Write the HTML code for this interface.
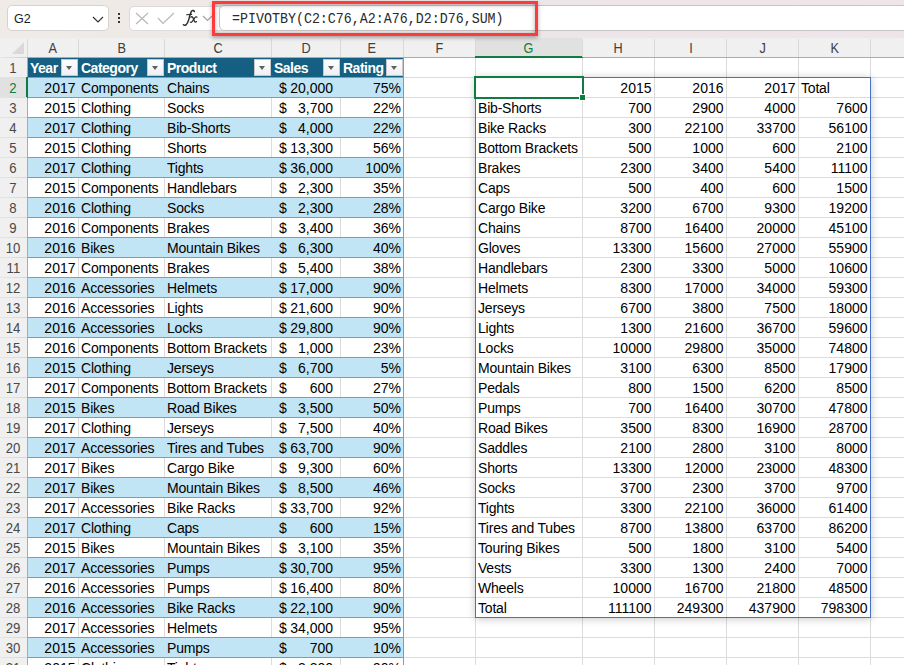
<!DOCTYPE html><html><head><meta charset="utf-8"><style>
*{margin:0;padding:0;box-sizing:border-box}
html,body{width:904px;height:665px;overflow:hidden;background:#fff}
body{position:relative;font-family:"Liberation Sans",sans-serif;font-size:14px;color:#000}
.a{position:absolute}
.t{position:absolute;white-space:nowrap;line-height:20px;height:20px}
.r{text-align:right}
.c{text-align:center}
</style></head><body>

<div class="a" style="left:78px;top:58px;width:1px;height:607px;background:#DCDCDC"></div>
<div class="a" style="left:164px;top:58px;width:1px;height:607px;background:#DCDCDC"></div>
<div class="a" style="left:271px;top:58px;width:1px;height:607px;background:#DCDCDC"></div>
<div class="a" style="left:340px;top:58px;width:1px;height:607px;background:#DCDCDC"></div>
<div class="a" style="left:403px;top:58px;width:1px;height:607px;background:#DCDCDC"></div>
<div class="a" style="left:475px;top:58px;width:1px;height:607px;background:#DCDCDC"></div>
<div class="a" style="left:582px;top:58px;width:1px;height:607px;background:#DCDCDC"></div>
<div class="a" style="left:654px;top:58px;width:1px;height:607px;background:#DCDCDC"></div>
<div class="a" style="left:726px;top:58px;width:1px;height:607px;background:#DCDCDC"></div>
<div class="a" style="left:798px;top:58px;width:1px;height:607px;background:#DCDCDC"></div>
<div class="a" style="left:870px;top:58px;width:1px;height:607px;background:#DCDCDC"></div>
<div class="a" style="left:942px;top:58px;width:1px;height:607px;background:#DCDCDC"></div>
<div class="a" style="left:28px;top:77px;width:876px;height:1px;background:#DCDCDC"></div>
<div class="a" style="left:28px;top:97px;width:876px;height:1px;background:#DCDCDC"></div>
<div class="a" style="left:28px;top:117px;width:876px;height:1px;background:#DCDCDC"></div>
<div class="a" style="left:28px;top:137px;width:876px;height:1px;background:#DCDCDC"></div>
<div class="a" style="left:28px;top:157px;width:876px;height:1px;background:#DCDCDC"></div>
<div class="a" style="left:28px;top:177px;width:876px;height:1px;background:#DCDCDC"></div>
<div class="a" style="left:28px;top:197px;width:876px;height:1px;background:#DCDCDC"></div>
<div class="a" style="left:28px;top:217px;width:876px;height:1px;background:#DCDCDC"></div>
<div class="a" style="left:28px;top:237px;width:876px;height:1px;background:#DCDCDC"></div>
<div class="a" style="left:28px;top:257px;width:876px;height:1px;background:#DCDCDC"></div>
<div class="a" style="left:28px;top:277px;width:876px;height:1px;background:#DCDCDC"></div>
<div class="a" style="left:28px;top:297px;width:876px;height:1px;background:#DCDCDC"></div>
<div class="a" style="left:28px;top:317px;width:876px;height:1px;background:#DCDCDC"></div>
<div class="a" style="left:28px;top:337px;width:876px;height:1px;background:#DCDCDC"></div>
<div class="a" style="left:28px;top:357px;width:876px;height:1px;background:#DCDCDC"></div>
<div class="a" style="left:28px;top:377px;width:876px;height:1px;background:#DCDCDC"></div>
<div class="a" style="left:28px;top:397px;width:876px;height:1px;background:#DCDCDC"></div>
<div class="a" style="left:28px;top:417px;width:876px;height:1px;background:#DCDCDC"></div>
<div class="a" style="left:28px;top:437px;width:876px;height:1px;background:#DCDCDC"></div>
<div class="a" style="left:28px;top:457px;width:876px;height:1px;background:#DCDCDC"></div>
<div class="a" style="left:28px;top:477px;width:876px;height:1px;background:#DCDCDC"></div>
<div class="a" style="left:28px;top:497px;width:876px;height:1px;background:#DCDCDC"></div>
<div class="a" style="left:28px;top:517px;width:876px;height:1px;background:#DCDCDC"></div>
<div class="a" style="left:28px;top:537px;width:876px;height:1px;background:#DCDCDC"></div>
<div class="a" style="left:28px;top:557px;width:876px;height:1px;background:#DCDCDC"></div>
<div class="a" style="left:28px;top:577px;width:876px;height:1px;background:#DCDCDC"></div>
<div class="a" style="left:28px;top:597px;width:876px;height:1px;background:#DCDCDC"></div>
<div class="a" style="left:28px;top:617px;width:876px;height:1px;background:#DCDCDC"></div>
<div class="a" style="left:28px;top:637px;width:876px;height:1px;background:#DCDCDC"></div>
<div class="a" style="left:28px;top:657px;width:876px;height:1px;background:#DCDCDC"></div>
<div class="a" style="left:28px;top:677px;width:876px;height:1px;background:#DCDCDC"></div>
<div class="a" style="left:28px;top:58px;width:376px;height:19px;background:#156082"></div>
<div class="a" style="left:28px;top:77px;width:376px;height:1px;background:#46B1E1"></div>
<div class="t" style="left:30px;top:58px;font-weight:bold;color:#fff;letter-spacing:-0.5px">Year</div>
<div class="a" style="left:61px;top:59px;width:17px;height:17px;background:linear-gradient(#fff,#EDEFF2);border:1px solid #CBC5C5"></div>
<div class="a" style="left:66px;top:66px;width:0;height:0;border-left:3.5px solid transparent;border-right:3.5px solid transparent;border-top:4px solid #5F5F5F"></div>
<div class="t" style="left:81px;top:58px;font-weight:bold;color:#fff;letter-spacing:-0.5px">Category</div>
<div class="a" style="left:147px;top:59px;width:17px;height:17px;background:linear-gradient(#fff,#EDEFF2);border:1px solid #CBC5C5"></div>
<div class="a" style="left:152px;top:66px;width:0;height:0;border-left:3.5px solid transparent;border-right:3.5px solid transparent;border-top:4px solid #5F5F5F"></div>
<div class="t" style="left:167px;top:58px;font-weight:bold;color:#fff;letter-spacing:-0.5px">Product</div>
<div class="a" style="left:254px;top:59px;width:17px;height:17px;background:linear-gradient(#fff,#EDEFF2);border:1px solid #CBC5C5"></div>
<div class="a" style="left:259px;top:66px;width:0;height:0;border-left:3.5px solid transparent;border-right:3.5px solid transparent;border-top:4px solid #5F5F5F"></div>
<div class="t" style="left:274px;top:58px;font-weight:bold;color:#fff;letter-spacing:-0.5px">Sales</div>
<div class="a" style="left:323px;top:59px;width:17px;height:17px;background:linear-gradient(#fff,#EDEFF2);border:1px solid #CBC5C5"></div>
<div class="a" style="left:328px;top:66px;width:0;height:0;border-left:3.5px solid transparent;border-right:3.5px solid transparent;border-top:4px solid #5F5F5F"></div>
<div class="t" style="left:343px;top:58px;font-weight:bold;color:#fff;letter-spacing:-0.5px">Rating</div>
<div class="a" style="left:386px;top:59px;width:17px;height:17px;background:linear-gradient(#fff,#EDEFF2);border:1px solid #CBC5C5"></div>
<div class="a" style="left:391px;top:66px;width:0;height:0;border-left:3.5px solid transparent;border-right:3.5px solid transparent;border-top:4px solid #5F5F5F"></div>
<div class="a" style="left:28px;top:78px;width:376px;height:19px;background:#C1E5F5"></div>
<div class="a" style="left:28px;top:97px;width:376px;height:1px;background:#46B1E1"></div>
<div class="t r" style="left:28px;width:47.5px;top:78px">2017</div>
<div class="t" style="left:81px;top:78px;letter-spacing:-0.2px">Components</div>
<div class="t" style="left:167px;top:78px;letter-spacing:-0.2px">Chains</div>
<div class="t" style="left:279px;top:78px">$</div>
<div class="t r" style="left:272px;width:61px;top:78px">20,000</div>
<div class="t r" style="left:341px;width:60px;top:78px">75%</div>
<div class="a" style="left:28px;top:117px;width:376px;height:1px;background:#46B1E1"></div>
<div class="t r" style="left:28px;width:47.5px;top:98px">2015</div>
<div class="t" style="left:81px;top:98px;letter-spacing:-0.2px">Clothing</div>
<div class="t" style="left:167px;top:98px;letter-spacing:-0.2px">Socks</div>
<div class="t" style="left:279px;top:98px">$</div>
<div class="t r" style="left:272px;width:61px;top:98px">3,700</div>
<div class="t r" style="left:341px;width:60px;top:98px">22%</div>
<div class="a" style="left:28px;top:118px;width:376px;height:19px;background:#C1E5F5"></div>
<div class="a" style="left:28px;top:137px;width:376px;height:1px;background:#46B1E1"></div>
<div class="t r" style="left:28px;width:47.5px;top:118px">2017</div>
<div class="t" style="left:81px;top:118px;letter-spacing:-0.2px">Clothing</div>
<div class="t" style="left:167px;top:118px;letter-spacing:-0.2px">Bib-Shorts</div>
<div class="t" style="left:279px;top:118px">$</div>
<div class="t r" style="left:272px;width:61px;top:118px">4,000</div>
<div class="t r" style="left:341px;width:60px;top:118px">22%</div>
<div class="a" style="left:28px;top:157px;width:376px;height:1px;background:#46B1E1"></div>
<div class="t r" style="left:28px;width:47.5px;top:138px">2015</div>
<div class="t" style="left:81px;top:138px;letter-spacing:-0.2px">Clothing</div>
<div class="t" style="left:167px;top:138px;letter-spacing:-0.2px">Shorts</div>
<div class="t" style="left:279px;top:138px">$</div>
<div class="t r" style="left:272px;width:61px;top:138px">13,300</div>
<div class="t r" style="left:341px;width:60px;top:138px">56%</div>
<div class="a" style="left:28px;top:158px;width:376px;height:19px;background:#C1E5F5"></div>
<div class="a" style="left:28px;top:177px;width:376px;height:1px;background:#46B1E1"></div>
<div class="t r" style="left:28px;width:47.5px;top:158px">2017</div>
<div class="t" style="left:81px;top:158px;letter-spacing:-0.2px">Clothing</div>
<div class="t" style="left:167px;top:158px;letter-spacing:-0.2px">Tights</div>
<div class="t" style="left:279px;top:158px">$</div>
<div class="t r" style="left:272px;width:61px;top:158px">36,000</div>
<div class="t r" style="left:341px;width:60px;top:158px">100%</div>
<div class="a" style="left:28px;top:197px;width:376px;height:1px;background:#46B1E1"></div>
<div class="t r" style="left:28px;width:47.5px;top:178px">2015</div>
<div class="t" style="left:81px;top:178px;letter-spacing:-0.2px">Components</div>
<div class="t" style="left:167px;top:178px;letter-spacing:-0.2px">Handlebars</div>
<div class="t" style="left:279px;top:178px">$</div>
<div class="t r" style="left:272px;width:61px;top:178px">2,300</div>
<div class="t r" style="left:341px;width:60px;top:178px">35%</div>
<div class="a" style="left:28px;top:198px;width:376px;height:19px;background:#C1E5F5"></div>
<div class="a" style="left:28px;top:217px;width:376px;height:1px;background:#46B1E1"></div>
<div class="t r" style="left:28px;width:47.5px;top:198px">2016</div>
<div class="t" style="left:81px;top:198px;letter-spacing:-0.2px">Clothing</div>
<div class="t" style="left:167px;top:198px;letter-spacing:-0.2px">Socks</div>
<div class="t" style="left:279px;top:198px">$</div>
<div class="t r" style="left:272px;width:61px;top:198px">2,300</div>
<div class="t r" style="left:341px;width:60px;top:198px">28%</div>
<div class="a" style="left:28px;top:237px;width:376px;height:1px;background:#46B1E1"></div>
<div class="t r" style="left:28px;width:47.5px;top:218px">2016</div>
<div class="t" style="left:81px;top:218px;letter-spacing:-0.2px">Components</div>
<div class="t" style="left:167px;top:218px;letter-spacing:-0.2px">Brakes</div>
<div class="t" style="left:279px;top:218px">$</div>
<div class="t r" style="left:272px;width:61px;top:218px">3,400</div>
<div class="t r" style="left:341px;width:60px;top:218px">36%</div>
<div class="a" style="left:28px;top:238px;width:376px;height:19px;background:#C1E5F5"></div>
<div class="a" style="left:28px;top:257px;width:376px;height:1px;background:#46B1E1"></div>
<div class="t r" style="left:28px;width:47.5px;top:238px">2016</div>
<div class="t" style="left:81px;top:238px;letter-spacing:-0.2px">Bikes</div>
<div class="t" style="left:167px;top:238px;letter-spacing:-0.2px">Mountain Bikes</div>
<div class="t" style="left:279px;top:238px">$</div>
<div class="t r" style="left:272px;width:61px;top:238px">6,300</div>
<div class="t r" style="left:341px;width:60px;top:238px">40%</div>
<div class="a" style="left:28px;top:277px;width:376px;height:1px;background:#46B1E1"></div>
<div class="t r" style="left:28px;width:47.5px;top:258px">2017</div>
<div class="t" style="left:81px;top:258px;letter-spacing:-0.2px">Components</div>
<div class="t" style="left:167px;top:258px;letter-spacing:-0.2px">Brakes</div>
<div class="t" style="left:279px;top:258px">$</div>
<div class="t r" style="left:272px;width:61px;top:258px">5,400</div>
<div class="t r" style="left:341px;width:60px;top:258px">38%</div>
<div class="a" style="left:28px;top:278px;width:376px;height:19px;background:#C1E5F5"></div>
<div class="a" style="left:28px;top:297px;width:376px;height:1px;background:#46B1E1"></div>
<div class="t r" style="left:28px;width:47.5px;top:278px">2016</div>
<div class="t" style="left:81px;top:278px;letter-spacing:-0.2px">Accessories</div>
<div class="t" style="left:167px;top:278px;letter-spacing:-0.2px">Helmets</div>
<div class="t" style="left:279px;top:278px">$</div>
<div class="t r" style="left:272px;width:61px;top:278px">17,000</div>
<div class="t r" style="left:341px;width:60px;top:278px">90%</div>
<div class="a" style="left:28px;top:317px;width:376px;height:1px;background:#46B1E1"></div>
<div class="t r" style="left:28px;width:47.5px;top:298px">2016</div>
<div class="t" style="left:81px;top:298px;letter-spacing:-0.2px">Accessories</div>
<div class="t" style="left:167px;top:298px;letter-spacing:-0.2px">Lights</div>
<div class="t" style="left:279px;top:298px">$</div>
<div class="t r" style="left:272px;width:61px;top:298px">21,600</div>
<div class="t r" style="left:341px;width:60px;top:298px">90%</div>
<div class="a" style="left:28px;top:318px;width:376px;height:19px;background:#C1E5F5"></div>
<div class="a" style="left:28px;top:337px;width:376px;height:1px;background:#46B1E1"></div>
<div class="t r" style="left:28px;width:47.5px;top:318px">2016</div>
<div class="t" style="left:81px;top:318px;letter-spacing:-0.2px">Accessories</div>
<div class="t" style="left:167px;top:318px;letter-spacing:-0.2px">Locks</div>
<div class="t" style="left:279px;top:318px">$</div>
<div class="t r" style="left:272px;width:61px;top:318px">29,800</div>
<div class="t r" style="left:341px;width:60px;top:318px">90%</div>
<div class="a" style="left:28px;top:357px;width:376px;height:1px;background:#46B1E1"></div>
<div class="t r" style="left:28px;width:47.5px;top:338px">2016</div>
<div class="t" style="left:81px;top:338px;letter-spacing:-0.2px">Components</div>
<div class="t" style="left:167px;top:338px;letter-spacing:-0.2px">Bottom Brackets</div>
<div class="t" style="left:279px;top:338px">$</div>
<div class="t r" style="left:272px;width:61px;top:338px">1,000</div>
<div class="t r" style="left:341px;width:60px;top:338px">23%</div>
<div class="a" style="left:28px;top:358px;width:376px;height:19px;background:#C1E5F5"></div>
<div class="a" style="left:28px;top:377px;width:376px;height:1px;background:#46B1E1"></div>
<div class="t r" style="left:28px;width:47.5px;top:358px">2015</div>
<div class="t" style="left:81px;top:358px;letter-spacing:-0.2px">Clothing</div>
<div class="t" style="left:167px;top:358px;letter-spacing:-0.2px">Jerseys</div>
<div class="t" style="left:279px;top:358px">$</div>
<div class="t r" style="left:272px;width:61px;top:358px">6,700</div>
<div class="t r" style="left:341px;width:60px;top:358px">5%</div>
<div class="a" style="left:28px;top:397px;width:376px;height:1px;background:#46B1E1"></div>
<div class="t r" style="left:28px;width:47.5px;top:378px">2017</div>
<div class="t" style="left:81px;top:378px;letter-spacing:-0.2px">Components</div>
<div class="t" style="left:167px;top:378px;letter-spacing:-0.2px">Bottom Brackets</div>
<div class="t" style="left:279px;top:378px">$</div>
<div class="t r" style="left:272px;width:61px;top:378px">600</div>
<div class="t r" style="left:341px;width:60px;top:378px">27%</div>
<div class="a" style="left:28px;top:398px;width:376px;height:19px;background:#C1E5F5"></div>
<div class="a" style="left:28px;top:417px;width:376px;height:1px;background:#46B1E1"></div>
<div class="t r" style="left:28px;width:47.5px;top:398px">2015</div>
<div class="t" style="left:81px;top:398px;letter-spacing:-0.2px">Bikes</div>
<div class="t" style="left:167px;top:398px;letter-spacing:-0.2px">Road Bikes</div>
<div class="t" style="left:279px;top:398px">$</div>
<div class="t r" style="left:272px;width:61px;top:398px">3,500</div>
<div class="t r" style="left:341px;width:60px;top:398px">50%</div>
<div class="a" style="left:28px;top:437px;width:376px;height:1px;background:#46B1E1"></div>
<div class="t r" style="left:28px;width:47.5px;top:418px">2017</div>
<div class="t" style="left:81px;top:418px;letter-spacing:-0.2px">Clothing</div>
<div class="t" style="left:167px;top:418px;letter-spacing:-0.2px">Jerseys</div>
<div class="t" style="left:279px;top:418px">$</div>
<div class="t r" style="left:272px;width:61px;top:418px">7,500</div>
<div class="t r" style="left:341px;width:60px;top:418px">40%</div>
<div class="a" style="left:28px;top:438px;width:376px;height:19px;background:#C1E5F5"></div>
<div class="a" style="left:28px;top:457px;width:376px;height:1px;background:#46B1E1"></div>
<div class="t r" style="left:28px;width:47.5px;top:438px">2017</div>
<div class="t" style="left:81px;top:438px;letter-spacing:-0.2px">Accessories</div>
<div class="t" style="left:167px;top:438px;letter-spacing:-0.2px">Tires and Tubes</div>
<div class="t" style="left:279px;top:438px">$</div>
<div class="t r" style="left:272px;width:61px;top:438px">63,700</div>
<div class="t r" style="left:341px;width:60px;top:438px">90%</div>
<div class="a" style="left:28px;top:477px;width:376px;height:1px;background:#46B1E1"></div>
<div class="t r" style="left:28px;width:47.5px;top:458px">2017</div>
<div class="t" style="left:81px;top:458px;letter-spacing:-0.2px">Bikes</div>
<div class="t" style="left:167px;top:458px;letter-spacing:-0.2px">Cargo Bike</div>
<div class="t" style="left:279px;top:458px">$</div>
<div class="t r" style="left:272px;width:61px;top:458px">9,300</div>
<div class="t r" style="left:341px;width:60px;top:458px">60%</div>
<div class="a" style="left:28px;top:478px;width:376px;height:19px;background:#C1E5F5"></div>
<div class="a" style="left:28px;top:497px;width:376px;height:1px;background:#46B1E1"></div>
<div class="t r" style="left:28px;width:47.5px;top:478px">2017</div>
<div class="t" style="left:81px;top:478px;letter-spacing:-0.2px">Bikes</div>
<div class="t" style="left:167px;top:478px;letter-spacing:-0.2px">Mountain Bikes</div>
<div class="t" style="left:279px;top:478px">$</div>
<div class="t r" style="left:272px;width:61px;top:478px">8,500</div>
<div class="t r" style="left:341px;width:60px;top:478px">46%</div>
<div class="a" style="left:28px;top:517px;width:376px;height:1px;background:#46B1E1"></div>
<div class="t r" style="left:28px;width:47.5px;top:498px">2017</div>
<div class="t" style="left:81px;top:498px;letter-spacing:-0.2px">Accessories</div>
<div class="t" style="left:167px;top:498px;letter-spacing:-0.2px">Bike Racks</div>
<div class="t" style="left:279px;top:498px">$</div>
<div class="t r" style="left:272px;width:61px;top:498px">33,700</div>
<div class="t r" style="left:341px;width:60px;top:498px">92%</div>
<div class="a" style="left:28px;top:518px;width:376px;height:19px;background:#C1E5F5"></div>
<div class="a" style="left:28px;top:537px;width:376px;height:1px;background:#46B1E1"></div>
<div class="t r" style="left:28px;width:47.5px;top:518px">2017</div>
<div class="t" style="left:81px;top:518px;letter-spacing:-0.2px">Clothing</div>
<div class="t" style="left:167px;top:518px;letter-spacing:-0.2px">Caps</div>
<div class="t" style="left:279px;top:518px">$</div>
<div class="t r" style="left:272px;width:61px;top:518px">600</div>
<div class="t r" style="left:341px;width:60px;top:518px">15%</div>
<div class="a" style="left:28px;top:557px;width:376px;height:1px;background:#46B1E1"></div>
<div class="t r" style="left:28px;width:47.5px;top:538px">2015</div>
<div class="t" style="left:81px;top:538px;letter-spacing:-0.2px">Bikes</div>
<div class="t" style="left:167px;top:538px;letter-spacing:-0.2px">Mountain Bikes</div>
<div class="t" style="left:279px;top:538px">$</div>
<div class="t r" style="left:272px;width:61px;top:538px">3,100</div>
<div class="t r" style="left:341px;width:60px;top:538px">35%</div>
<div class="a" style="left:28px;top:558px;width:376px;height:19px;background:#C1E5F5"></div>
<div class="a" style="left:28px;top:577px;width:376px;height:1px;background:#46B1E1"></div>
<div class="t r" style="left:28px;width:47.5px;top:558px">2017</div>
<div class="t" style="left:81px;top:558px;letter-spacing:-0.2px">Accessories</div>
<div class="t" style="left:167px;top:558px;letter-spacing:-0.2px">Pumps</div>
<div class="t" style="left:279px;top:558px">$</div>
<div class="t r" style="left:272px;width:61px;top:558px">30,700</div>
<div class="t r" style="left:341px;width:60px;top:558px">95%</div>
<div class="a" style="left:28px;top:597px;width:376px;height:1px;background:#46B1E1"></div>
<div class="t r" style="left:28px;width:47.5px;top:578px">2016</div>
<div class="t" style="left:81px;top:578px;letter-spacing:-0.2px">Accessories</div>
<div class="t" style="left:167px;top:578px;letter-spacing:-0.2px">Pumps</div>
<div class="t" style="left:279px;top:578px">$</div>
<div class="t r" style="left:272px;width:61px;top:578px">16,400</div>
<div class="t r" style="left:341px;width:60px;top:578px">80%</div>
<div class="a" style="left:28px;top:598px;width:376px;height:19px;background:#C1E5F5"></div>
<div class="a" style="left:28px;top:617px;width:376px;height:1px;background:#46B1E1"></div>
<div class="t r" style="left:28px;width:47.5px;top:598px">2016</div>
<div class="t" style="left:81px;top:598px;letter-spacing:-0.2px">Accessories</div>
<div class="t" style="left:167px;top:598px;letter-spacing:-0.2px">Bike Racks</div>
<div class="t" style="left:279px;top:598px">$</div>
<div class="t r" style="left:272px;width:61px;top:598px">22,100</div>
<div class="t r" style="left:341px;width:60px;top:598px">90%</div>
<div class="a" style="left:28px;top:637px;width:376px;height:1px;background:#46B1E1"></div>
<div class="t r" style="left:28px;width:47.5px;top:618px">2017</div>
<div class="t" style="left:81px;top:618px;letter-spacing:-0.2px">Accessories</div>
<div class="t" style="left:167px;top:618px;letter-spacing:-0.2px">Helmets</div>
<div class="t" style="left:279px;top:618px">$</div>
<div class="t r" style="left:272px;width:61px;top:618px">34,000</div>
<div class="t r" style="left:341px;width:60px;top:618px">95%</div>
<div class="a" style="left:28px;top:638px;width:376px;height:19px;background:#C1E5F5"></div>
<div class="a" style="left:28px;top:657px;width:376px;height:1px;background:#46B1E1"></div>
<div class="t r" style="left:28px;width:47.5px;top:638px">2015</div>
<div class="t" style="left:81px;top:638px;letter-spacing:-0.2px">Accessories</div>
<div class="t" style="left:167px;top:638px;letter-spacing:-0.2px">Pumps</div>
<div class="t" style="left:279px;top:638px">$</div>
<div class="t r" style="left:272px;width:61px;top:638px">700</div>
<div class="t r" style="left:341px;width:60px;top:638px">10%</div>
<div class="a" style="left:28px;top:677px;width:376px;height:1px;background:#46B1E1"></div>
<div class="t r" style="left:28px;width:47.5px;top:658px">2015</div>
<div class="t" style="left:81px;top:658px;letter-spacing:-0.2px">Clothing</div>
<div class="t" style="left:167px;top:658px;letter-spacing:-0.2px">Tights</div>
<div class="t" style="left:279px;top:658px">$</div>
<div class="t r" style="left:272px;width:61px;top:658px">3,300</div>
<div class="t r" style="left:341px;width:60px;top:658px">90%</div>
<div class="a" style="left:403px;top:58px;width:1px;height:607px;background:#46B1E1"></div>
<div class="t r" style="left:583px;width:68.5px;top:78px">2015</div>
<div class="t r" style="left:655px;width:68.5px;top:78px">2016</div>
<div class="t r" style="left:727px;width:68.5px;top:78px">2017</div>
<div class="t" style="left:801px;top:78px;letter-spacing:-0.2px">Total</div>
<div class="t" style="left:478px;top:98px;letter-spacing:-0.2px">Bib-Shorts</div>
<div class="t r" style="left:583px;width:68.5px;top:98px">700</div>
<div class="t r" style="left:655px;width:68.5px;top:98px">2900</div>
<div class="t r" style="left:727px;width:68.5px;top:98px">4000</div>
<div class="t r" style="left:799px;width:68.5px;top:98px">7600</div>
<div class="t" style="left:478px;top:118px;letter-spacing:-0.2px">Bike Racks</div>
<div class="t r" style="left:583px;width:68.5px;top:118px">300</div>
<div class="t r" style="left:655px;width:68.5px;top:118px">22100</div>
<div class="t r" style="left:727px;width:68.5px;top:118px">33700</div>
<div class="t r" style="left:799px;width:68.5px;top:118px">56100</div>
<div class="t" style="left:478px;top:138px;letter-spacing:-0.2px">Bottom Brackets</div>
<div class="t r" style="left:583px;width:68.5px;top:138px">500</div>
<div class="t r" style="left:655px;width:68.5px;top:138px">1000</div>
<div class="t r" style="left:727px;width:68.5px;top:138px">600</div>
<div class="t r" style="left:799px;width:68.5px;top:138px">2100</div>
<div class="t" style="left:478px;top:158px;letter-spacing:-0.2px">Brakes</div>
<div class="t r" style="left:583px;width:68.5px;top:158px">2300</div>
<div class="t r" style="left:655px;width:68.5px;top:158px">3400</div>
<div class="t r" style="left:727px;width:68.5px;top:158px">5400</div>
<div class="t r" style="left:799px;width:68.5px;top:158px">11100</div>
<div class="t" style="left:478px;top:178px;letter-spacing:-0.2px">Caps</div>
<div class="t r" style="left:583px;width:68.5px;top:178px">500</div>
<div class="t r" style="left:655px;width:68.5px;top:178px">400</div>
<div class="t r" style="left:727px;width:68.5px;top:178px">600</div>
<div class="t r" style="left:799px;width:68.5px;top:178px">1500</div>
<div class="t" style="left:478px;top:198px;letter-spacing:-0.2px">Cargo Bike</div>
<div class="t r" style="left:583px;width:68.5px;top:198px">3200</div>
<div class="t r" style="left:655px;width:68.5px;top:198px">6700</div>
<div class="t r" style="left:727px;width:68.5px;top:198px">9300</div>
<div class="t r" style="left:799px;width:68.5px;top:198px">19200</div>
<div class="t" style="left:478px;top:218px;letter-spacing:-0.2px">Chains</div>
<div class="t r" style="left:583px;width:68.5px;top:218px">8700</div>
<div class="t r" style="left:655px;width:68.5px;top:218px">16400</div>
<div class="t r" style="left:727px;width:68.5px;top:218px">20000</div>
<div class="t r" style="left:799px;width:68.5px;top:218px">45100</div>
<div class="t" style="left:478px;top:238px;letter-spacing:-0.2px">Gloves</div>
<div class="t r" style="left:583px;width:68.5px;top:238px">13300</div>
<div class="t r" style="left:655px;width:68.5px;top:238px">15600</div>
<div class="t r" style="left:727px;width:68.5px;top:238px">27000</div>
<div class="t r" style="left:799px;width:68.5px;top:238px">55900</div>
<div class="t" style="left:478px;top:258px;letter-spacing:-0.2px">Handlebars</div>
<div class="t r" style="left:583px;width:68.5px;top:258px">2300</div>
<div class="t r" style="left:655px;width:68.5px;top:258px">3300</div>
<div class="t r" style="left:727px;width:68.5px;top:258px">5000</div>
<div class="t r" style="left:799px;width:68.5px;top:258px">10600</div>
<div class="t" style="left:478px;top:278px;letter-spacing:-0.2px">Helmets</div>
<div class="t r" style="left:583px;width:68.5px;top:278px">8300</div>
<div class="t r" style="left:655px;width:68.5px;top:278px">17000</div>
<div class="t r" style="left:727px;width:68.5px;top:278px">34000</div>
<div class="t r" style="left:799px;width:68.5px;top:278px">59300</div>
<div class="t" style="left:478px;top:298px;letter-spacing:-0.2px">Jerseys</div>
<div class="t r" style="left:583px;width:68.5px;top:298px">6700</div>
<div class="t r" style="left:655px;width:68.5px;top:298px">3800</div>
<div class="t r" style="left:727px;width:68.5px;top:298px">7500</div>
<div class="t r" style="left:799px;width:68.5px;top:298px">18000</div>
<div class="t" style="left:478px;top:318px;letter-spacing:-0.2px">Lights</div>
<div class="t r" style="left:583px;width:68.5px;top:318px">1300</div>
<div class="t r" style="left:655px;width:68.5px;top:318px">21600</div>
<div class="t r" style="left:727px;width:68.5px;top:318px">36700</div>
<div class="t r" style="left:799px;width:68.5px;top:318px">59600</div>
<div class="t" style="left:478px;top:338px;letter-spacing:-0.2px">Locks</div>
<div class="t r" style="left:583px;width:68.5px;top:338px">10000</div>
<div class="t r" style="left:655px;width:68.5px;top:338px">29800</div>
<div class="t r" style="left:727px;width:68.5px;top:338px">35000</div>
<div class="t r" style="left:799px;width:68.5px;top:338px">74800</div>
<div class="t" style="left:478px;top:358px;letter-spacing:-0.2px">Mountain Bikes</div>
<div class="t r" style="left:583px;width:68.5px;top:358px">3100</div>
<div class="t r" style="left:655px;width:68.5px;top:358px">6300</div>
<div class="t r" style="left:727px;width:68.5px;top:358px">8500</div>
<div class="t r" style="left:799px;width:68.5px;top:358px">17900</div>
<div class="t" style="left:478px;top:378px;letter-spacing:-0.2px">Pedals</div>
<div class="t r" style="left:583px;width:68.5px;top:378px">800</div>
<div class="t r" style="left:655px;width:68.5px;top:378px">1500</div>
<div class="t r" style="left:727px;width:68.5px;top:378px">6200</div>
<div class="t r" style="left:799px;width:68.5px;top:378px">8500</div>
<div class="t" style="left:478px;top:398px;letter-spacing:-0.2px">Pumps</div>
<div class="t r" style="left:583px;width:68.5px;top:398px">700</div>
<div class="t r" style="left:655px;width:68.5px;top:398px">16400</div>
<div class="t r" style="left:727px;width:68.5px;top:398px">30700</div>
<div class="t r" style="left:799px;width:68.5px;top:398px">47800</div>
<div class="t" style="left:478px;top:418px;letter-spacing:-0.2px">Road Bikes</div>
<div class="t r" style="left:583px;width:68.5px;top:418px">3500</div>
<div class="t r" style="left:655px;width:68.5px;top:418px">8300</div>
<div class="t r" style="left:727px;width:68.5px;top:418px">16900</div>
<div class="t r" style="left:799px;width:68.5px;top:418px">28700</div>
<div class="t" style="left:478px;top:438px;letter-spacing:-0.2px">Saddles</div>
<div class="t r" style="left:583px;width:68.5px;top:438px">2100</div>
<div class="t r" style="left:655px;width:68.5px;top:438px">2800</div>
<div class="t r" style="left:727px;width:68.5px;top:438px">3100</div>
<div class="t r" style="left:799px;width:68.5px;top:438px">8000</div>
<div class="t" style="left:478px;top:458px;letter-spacing:-0.2px">Shorts</div>
<div class="t r" style="left:583px;width:68.5px;top:458px">13300</div>
<div class="t r" style="left:655px;width:68.5px;top:458px">12000</div>
<div class="t r" style="left:727px;width:68.5px;top:458px">23000</div>
<div class="t r" style="left:799px;width:68.5px;top:458px">48300</div>
<div class="t" style="left:478px;top:478px;letter-spacing:-0.2px">Socks</div>
<div class="t r" style="left:583px;width:68.5px;top:478px">3700</div>
<div class="t r" style="left:655px;width:68.5px;top:478px">2300</div>
<div class="t r" style="left:727px;width:68.5px;top:478px">3700</div>
<div class="t r" style="left:799px;width:68.5px;top:478px">9700</div>
<div class="t" style="left:478px;top:498px;letter-spacing:-0.2px">Tights</div>
<div class="t r" style="left:583px;width:68.5px;top:498px">3300</div>
<div class="t r" style="left:655px;width:68.5px;top:498px">22100</div>
<div class="t r" style="left:727px;width:68.5px;top:498px">36000</div>
<div class="t r" style="left:799px;width:68.5px;top:498px">61400</div>
<div class="t" style="left:478px;top:518px;letter-spacing:-0.2px">Tires and Tubes</div>
<div class="t r" style="left:583px;width:68.5px;top:518px">8700</div>
<div class="t r" style="left:655px;width:68.5px;top:518px">13800</div>
<div class="t r" style="left:727px;width:68.5px;top:518px">63700</div>
<div class="t r" style="left:799px;width:68.5px;top:518px">86200</div>
<div class="t" style="left:478px;top:538px;letter-spacing:-0.2px">Touring Bikes</div>
<div class="t r" style="left:583px;width:68.5px;top:538px">500</div>
<div class="t r" style="left:655px;width:68.5px;top:538px">1800</div>
<div class="t r" style="left:727px;width:68.5px;top:538px">3100</div>
<div class="t r" style="left:799px;width:68.5px;top:538px">5400</div>
<div class="t" style="left:478px;top:558px;letter-spacing:-0.2px">Vests</div>
<div class="t r" style="left:583px;width:68.5px;top:558px">3300</div>
<div class="t r" style="left:655px;width:68.5px;top:558px">1300</div>
<div class="t r" style="left:727px;width:68.5px;top:558px">2400</div>
<div class="t r" style="left:799px;width:68.5px;top:558px">7000</div>
<div class="t" style="left:478px;top:578px;letter-spacing:-0.2px">Wheels</div>
<div class="t r" style="left:583px;width:68.5px;top:578px">10000</div>
<div class="t r" style="left:655px;width:68.5px;top:578px">16700</div>
<div class="t r" style="left:727px;width:68.5px;top:578px">21800</div>
<div class="t r" style="left:799px;width:68.5px;top:578px">48500</div>
<div class="t" style="left:478px;top:598px;letter-spacing:-0.2px">Total</div>
<div class="t r" style="left:583px;width:68.5px;top:598px">111100</div>
<div class="t r" style="left:655px;width:68.5px;top:598px">249300</div>
<div class="t r" style="left:727px;width:68.5px;top:598px">437900</div>
<div class="t r" style="left:799px;width:68.5px;top:598px">798300</div>
<div class="a" style="left:475px;top:77px;width:396px;height:541px;border:1px solid #4472C4;box-shadow:0 1px 8px rgba(0,0,0,.22)"></div>
<div class="a" style="left:474px;top:76px;width:110px;height:23px;border:2px solid #107C41"></div>
<div class="a" style="left:579px;top:94px;width:7px;height:7px;background:#fff"></div>
<div class="a" style="left:580px;top:95px;width:5px;height:5px;background:#107C41"></div>
<div class="a" style="left:0;top:38px;width:904px;height:19px;background:#F0F0F0"></div>
<div class="a" style="left:0;top:57px;width:904px;height:1px;background:#ABABAB"></div>
<div class="a" style="left:78px;top:39px;width:1px;height:18px;background:#D9D9D9"></div>
<div class="t c" style="left:28px;width:50px;top:38px;line-height:20px;font-size:14.3px;color:#404040"><span style="display:inline-block;transform:scaleX(0.89)">A</span></div>
<div class="a" style="left:164px;top:39px;width:1px;height:18px;background:#D9D9D9"></div>
<div class="t c" style="left:79px;width:85px;top:38px;line-height:20px;font-size:14.3px;color:#404040"><span style="display:inline-block;transform:scaleX(0.89)">B</span></div>
<div class="a" style="left:271px;top:39px;width:1px;height:18px;background:#D9D9D9"></div>
<div class="t c" style="left:165px;width:106px;top:38px;line-height:20px;font-size:14.3px;color:#404040"><span style="display:inline-block;transform:scaleX(0.89)">C</span></div>
<div class="a" style="left:340px;top:39px;width:1px;height:18px;background:#D9D9D9"></div>
<div class="t c" style="left:272px;width:68px;top:38px;line-height:20px;font-size:14.3px;color:#404040"><span style="display:inline-block;transform:scaleX(0.89)">D</span></div>
<div class="a" style="left:403px;top:39px;width:1px;height:18px;background:#D9D9D9"></div>
<div class="t c" style="left:341px;width:62px;top:38px;line-height:20px;font-size:14.3px;color:#404040"><span style="display:inline-block;transform:scaleX(0.89)">E</span></div>
<div class="a" style="left:475px;top:39px;width:1px;height:18px;background:#D9D9D9"></div>
<div class="t c" style="left:404px;width:71px;top:38px;line-height:20px;font-size:14.3px;color:#404040"><span style="display:inline-block;transform:scaleX(0.89)">F</span></div>
<div class="a" style="left:476px;top:38px;width:106px;height:18px;background:#E1E1E1"></div>
<div class="a" style="left:475px;top:56px;width:108px;height:2px;background:#107C41"></div>
<div class="a" style="left:582px;top:39px;width:1px;height:18px;background:#D9D9D9"></div>
<div class="t c" style="left:476px;width:106px;top:38px;line-height:20px;font-size:14.3px;color:#107C41"><span style="display:inline-block;transform:scaleX(0.89)">G</span></div>
<div class="a" style="left:654px;top:39px;width:1px;height:18px;background:#D9D9D9"></div>
<div class="t c" style="left:583px;width:71px;top:38px;line-height:20px;font-size:14.3px;color:#404040"><span style="display:inline-block;transform:scaleX(0.89)">H</span></div>
<div class="a" style="left:726px;top:39px;width:1px;height:18px;background:#D9D9D9"></div>
<div class="t c" style="left:655px;width:71px;top:38px;line-height:20px;font-size:14.3px;color:#404040"><span style="display:inline-block;transform:scaleX(0.89)">I</span></div>
<div class="a" style="left:798px;top:39px;width:1px;height:18px;background:#D9D9D9"></div>
<div class="t c" style="left:727px;width:71px;top:38px;line-height:20px;font-size:14.3px;color:#404040"><span style="display:inline-block;transform:scaleX(0.89)">J</span></div>
<div class="a" style="left:870px;top:39px;width:1px;height:18px;background:#D9D9D9"></div>
<div class="t c" style="left:799px;width:71px;top:38px;line-height:20px;font-size:14.3px;color:#404040"><span style="display:inline-block;transform:scaleX(0.89)">K</span></div>
<div class="a" style="left:942px;top:39px;width:1px;height:18px;background:#D9D9D9"></div>
<div class="t c" style="left:871px;width:71px;top:38px;line-height:20px;font-size:14.3px;color:#404040"><span style="display:inline-block;transform:scaleX(0.89)">L</span></div>
<div class="a" style="left:0;top:38px;width:27px;height:20px;background:#F0F0F0"></div>
<div class="a" style="left:0;top:57px;width:27px;height:1px;background:linear-gradient(90deg,#E8E8E8,#CDCDCD)"></div>
<div class="a" style="left:27px;top:39px;width:1px;height:18px;background:#D9D9D9"></div>
<svg class="a" style="left:12px;top:42px" width="12" height="12"><path d="M12 0 L12 12 L0 12 Z" fill="#D9D9D9"/></svg>
<div class="a" style="left:0;top:58px;width:27px;height:607px;background:#F0F0F0"></div>
<div class="a" style="left:27px;top:58px;width:1px;height:607px;background:#ABABAB"></div>
<div class="a" style="left:0;top:77px;width:27px;height:1px;background:linear-gradient(90deg,#E6E6E6,#D6D6D6)"></div>
<div class="t c" style="left:0;width:26px;top:58px;font-size:14.3px;line-height:20px;color:#484848"><span style="display:inline-block;transform:scaleX(0.92)">1</span></div>
<div class="a" style="left:0;top:78px;width:26px;height:19px;background:#E1E1E1"></div>
<div class="a" style="left:26px;top:77px;width:2px;height:21px;background:#107C41"></div>
<div class="a" style="left:0;top:97px;width:27px;height:1px;background:linear-gradient(90deg,#E6E6E6,#D6D6D6)"></div>
<div class="t c" style="left:0;width:26px;top:78px;font-size:14.3px;line-height:20px;color:#107C41"><span style="display:inline-block;transform:scaleX(0.92)">2</span></div>
<div class="a" style="left:0;top:117px;width:27px;height:1px;background:linear-gradient(90deg,#E6E6E6,#D6D6D6)"></div>
<div class="t c" style="left:0;width:26px;top:98px;font-size:14.3px;line-height:20px;color:#484848"><span style="display:inline-block;transform:scaleX(0.92)">3</span></div>
<div class="a" style="left:0;top:137px;width:27px;height:1px;background:linear-gradient(90deg,#E6E6E6,#D6D6D6)"></div>
<div class="t c" style="left:0;width:26px;top:118px;font-size:14.3px;line-height:20px;color:#484848"><span style="display:inline-block;transform:scaleX(0.92)">4</span></div>
<div class="a" style="left:0;top:157px;width:27px;height:1px;background:linear-gradient(90deg,#E6E6E6,#D6D6D6)"></div>
<div class="t c" style="left:0;width:26px;top:138px;font-size:14.3px;line-height:20px;color:#484848"><span style="display:inline-block;transform:scaleX(0.92)">5</span></div>
<div class="a" style="left:0;top:177px;width:27px;height:1px;background:linear-gradient(90deg,#E6E6E6,#D6D6D6)"></div>
<div class="t c" style="left:0;width:26px;top:158px;font-size:14.3px;line-height:20px;color:#484848"><span style="display:inline-block;transform:scaleX(0.92)">6</span></div>
<div class="a" style="left:0;top:197px;width:27px;height:1px;background:linear-gradient(90deg,#E6E6E6,#D6D6D6)"></div>
<div class="t c" style="left:0;width:26px;top:178px;font-size:14.3px;line-height:20px;color:#484848"><span style="display:inline-block;transform:scaleX(0.92)">7</span></div>
<div class="a" style="left:0;top:217px;width:27px;height:1px;background:linear-gradient(90deg,#E6E6E6,#D6D6D6)"></div>
<div class="t c" style="left:0;width:26px;top:198px;font-size:14.3px;line-height:20px;color:#484848"><span style="display:inline-block;transform:scaleX(0.92)">8</span></div>
<div class="a" style="left:0;top:237px;width:27px;height:1px;background:linear-gradient(90deg,#E6E6E6,#D6D6D6)"></div>
<div class="t c" style="left:0;width:26px;top:218px;font-size:14.3px;line-height:20px;color:#484848"><span style="display:inline-block;transform:scaleX(0.92)">9</span></div>
<div class="a" style="left:0;top:257px;width:27px;height:1px;background:linear-gradient(90deg,#E6E6E6,#D6D6D6)"></div>
<div class="t c" style="left:0;width:26px;top:238px;font-size:14.3px;line-height:20px;color:#484848"><span style="display:inline-block;transform:scaleX(0.92)">10</span></div>
<div class="a" style="left:0;top:277px;width:27px;height:1px;background:linear-gradient(90deg,#E6E6E6,#D6D6D6)"></div>
<div class="t c" style="left:0;width:26px;top:258px;font-size:14.3px;line-height:20px;color:#484848"><span style="display:inline-block;transform:scaleX(0.92)">11</span></div>
<div class="a" style="left:0;top:297px;width:27px;height:1px;background:linear-gradient(90deg,#E6E6E6,#D6D6D6)"></div>
<div class="t c" style="left:0;width:26px;top:278px;font-size:14.3px;line-height:20px;color:#484848"><span style="display:inline-block;transform:scaleX(0.92)">12</span></div>
<div class="a" style="left:0;top:317px;width:27px;height:1px;background:linear-gradient(90deg,#E6E6E6,#D6D6D6)"></div>
<div class="t c" style="left:0;width:26px;top:298px;font-size:14.3px;line-height:20px;color:#484848"><span style="display:inline-block;transform:scaleX(0.92)">13</span></div>
<div class="a" style="left:0;top:337px;width:27px;height:1px;background:linear-gradient(90deg,#E6E6E6,#D6D6D6)"></div>
<div class="t c" style="left:0;width:26px;top:318px;font-size:14.3px;line-height:20px;color:#484848"><span style="display:inline-block;transform:scaleX(0.92)">14</span></div>
<div class="a" style="left:0;top:357px;width:27px;height:1px;background:linear-gradient(90deg,#E6E6E6,#D6D6D6)"></div>
<div class="t c" style="left:0;width:26px;top:338px;font-size:14.3px;line-height:20px;color:#484848"><span style="display:inline-block;transform:scaleX(0.92)">15</span></div>
<div class="a" style="left:0;top:377px;width:27px;height:1px;background:linear-gradient(90deg,#E6E6E6,#D6D6D6)"></div>
<div class="t c" style="left:0;width:26px;top:358px;font-size:14.3px;line-height:20px;color:#484848"><span style="display:inline-block;transform:scaleX(0.92)">16</span></div>
<div class="a" style="left:0;top:397px;width:27px;height:1px;background:linear-gradient(90deg,#E6E6E6,#D6D6D6)"></div>
<div class="t c" style="left:0;width:26px;top:378px;font-size:14.3px;line-height:20px;color:#484848"><span style="display:inline-block;transform:scaleX(0.92)">17</span></div>
<div class="a" style="left:0;top:417px;width:27px;height:1px;background:linear-gradient(90deg,#E6E6E6,#D6D6D6)"></div>
<div class="t c" style="left:0;width:26px;top:398px;font-size:14.3px;line-height:20px;color:#484848"><span style="display:inline-block;transform:scaleX(0.92)">18</span></div>
<div class="a" style="left:0;top:437px;width:27px;height:1px;background:linear-gradient(90deg,#E6E6E6,#D6D6D6)"></div>
<div class="t c" style="left:0;width:26px;top:418px;font-size:14.3px;line-height:20px;color:#484848"><span style="display:inline-block;transform:scaleX(0.92)">19</span></div>
<div class="a" style="left:0;top:457px;width:27px;height:1px;background:linear-gradient(90deg,#E6E6E6,#D6D6D6)"></div>
<div class="t c" style="left:0;width:26px;top:438px;font-size:14.3px;line-height:20px;color:#484848"><span style="display:inline-block;transform:scaleX(0.92)">20</span></div>
<div class="a" style="left:0;top:477px;width:27px;height:1px;background:linear-gradient(90deg,#E6E6E6,#D6D6D6)"></div>
<div class="t c" style="left:0;width:26px;top:458px;font-size:14.3px;line-height:20px;color:#484848"><span style="display:inline-block;transform:scaleX(0.92)">21</span></div>
<div class="a" style="left:0;top:497px;width:27px;height:1px;background:linear-gradient(90deg,#E6E6E6,#D6D6D6)"></div>
<div class="t c" style="left:0;width:26px;top:478px;font-size:14.3px;line-height:20px;color:#484848"><span style="display:inline-block;transform:scaleX(0.92)">22</span></div>
<div class="a" style="left:0;top:517px;width:27px;height:1px;background:linear-gradient(90deg,#E6E6E6,#D6D6D6)"></div>
<div class="t c" style="left:0;width:26px;top:498px;font-size:14.3px;line-height:20px;color:#484848"><span style="display:inline-block;transform:scaleX(0.92)">23</span></div>
<div class="a" style="left:0;top:537px;width:27px;height:1px;background:linear-gradient(90deg,#E6E6E6,#D6D6D6)"></div>
<div class="t c" style="left:0;width:26px;top:518px;font-size:14.3px;line-height:20px;color:#484848"><span style="display:inline-block;transform:scaleX(0.92)">24</span></div>
<div class="a" style="left:0;top:557px;width:27px;height:1px;background:linear-gradient(90deg,#E6E6E6,#D6D6D6)"></div>
<div class="t c" style="left:0;width:26px;top:538px;font-size:14.3px;line-height:20px;color:#484848"><span style="display:inline-block;transform:scaleX(0.92)">25</span></div>
<div class="a" style="left:0;top:577px;width:27px;height:1px;background:linear-gradient(90deg,#E6E6E6,#D6D6D6)"></div>
<div class="t c" style="left:0;width:26px;top:558px;font-size:14.3px;line-height:20px;color:#484848"><span style="display:inline-block;transform:scaleX(0.92)">26</span></div>
<div class="a" style="left:0;top:597px;width:27px;height:1px;background:linear-gradient(90deg,#E6E6E6,#D6D6D6)"></div>
<div class="t c" style="left:0;width:26px;top:578px;font-size:14.3px;line-height:20px;color:#484848"><span style="display:inline-block;transform:scaleX(0.92)">27</span></div>
<div class="a" style="left:0;top:617px;width:27px;height:1px;background:linear-gradient(90deg,#E6E6E6,#D6D6D6)"></div>
<div class="t c" style="left:0;width:26px;top:598px;font-size:14.3px;line-height:20px;color:#484848"><span style="display:inline-block;transform:scaleX(0.92)">28</span></div>
<div class="a" style="left:0;top:637px;width:27px;height:1px;background:linear-gradient(90deg,#E6E6E6,#D6D6D6)"></div>
<div class="t c" style="left:0;width:26px;top:618px;font-size:14.3px;line-height:20px;color:#484848"><span style="display:inline-block;transform:scaleX(0.92)">29</span></div>
<div class="a" style="left:0;top:657px;width:27px;height:1px;background:linear-gradient(90deg,#E6E6E6,#D6D6D6)"></div>
<div class="t c" style="left:0;width:26px;top:638px;font-size:14.3px;line-height:20px;color:#484848"><span style="display:inline-block;transform:scaleX(0.92)">30</span></div>
<div class="a" style="left:0;top:677px;width:27px;height:1px;background:linear-gradient(90deg,#E6E6E6,#D6D6D6)"></div>
<div class="t c" style="left:0;width:26px;top:658px;font-size:14.3px;line-height:20px;color:#484848"><span style="display:inline-block;transform:scaleX(0.92)">31</span></div>
<div class="a" style="left:0;top:0;width:904px;height:38px;background:linear-gradient(90deg,#EFEBE6,#EDE6E7 60%,#EDE5EA)"></div>
<div class="a" style="left:7px;top:5px;width:102px;height:26px;background:#fff;border:1px solid #D6D2D0;border-radius:5px"></div>
<div class="t" style="left:14px;top:9px;font-size:12.5px;color:#1a1a1a">G2</div>
<svg class="a" style="left:92px;top:16px" width="12" height="8"><path d="M1 1 L6 6 L11 1" fill="none" stroke="#333" stroke-width="1.2"/></svg>
<div class="a" style="left:118px;top:13px;width:2px;height:2px;background:#333"></div>
<div class="a" style="left:118px;top:17px;width:2px;height:2px;background:#333"></div>
<div class="a" style="left:118px;top:21px;width:2px;height:2px;background:#333"></div>
<div class="a" style="left:129px;top:6px;width:100px;height:25px;background:#fff;border:1px solid #DEDADA;border-radius:5px"></div>
<svg class="a" style="left:135px;top:12px" width="14" height="13"><path d="M1 1 L13 12 M13 1 L1 12" fill="none" stroke="#B8B8B8" stroke-width="1.2"/></svg>
<svg class="a" style="left:157px;top:12px" width="18" height="13"><path d="M1 6 L6 11.5 L17 1" fill="none" stroke="#B8B8B8" stroke-width="1.2"/></svg>
<svg class="a" style="left:178px;top:6px" width="38" height="24"><g fill="none" stroke="#2b2b2b" stroke-linecap="round"><path d="M16.4 5.6 C16 4.4 14.6 4 13.7 4.9 C12.8 5.9 12.2 8.2 11.3 11.6 C10.4 15 9.6 17.4 8.2 18.6 C7.2 19.4 6 19.3 5.4 18.7" stroke-width="1.45"/><path d="M8.6 8.7 L13.6 8.4" stroke-width="1.15"/><path d="M12.9 11.1 C13.8 10.5 14.6 10.7 15.1 11.9 L16.5 15.4 C17 16.4 17.8 16.4 18.5 15.6" stroke-width="1.3"/><path d="M19 11.2 C18.5 10.6 17.7 10.7 17.1 11.4 L13.9 15.8 C13.4 16.5 12.8 16.5 12.3 16.1" stroke-width="1.15"/></g></svg>
<svg class="a" style="left:202px;top:15px" width="11" height="7"><path d="M1 1 L5.5 5.5 L10 1" fill="none" stroke="#A0A0A0" stroke-width="1.1"/></svg>
<div class="a" style="left:219px;top:5px;width:700px;height:26px;background:#fff;border:1px solid #C8C4C4;border-radius:5px"></div>
<div class="t" style="left:231.5px;top:9px;font-family:'Liberation Mono',monospace;font-size:14.4px;transform:scaleX(0.925);transform-origin:0 0;color:#2a2a2a">=PIVOTBY(C2:C76,A2:A76,D2:D76,SUM)</div>
<div class="a" style="left:212px;top:1px;width:326px;height:35px;border:3px solid #FF3A3F;box-shadow:0 2px 4px rgba(0,0,0,.3),inset 0 1px 5px rgba(0,0,0,.3)"></div>
</body></html>
